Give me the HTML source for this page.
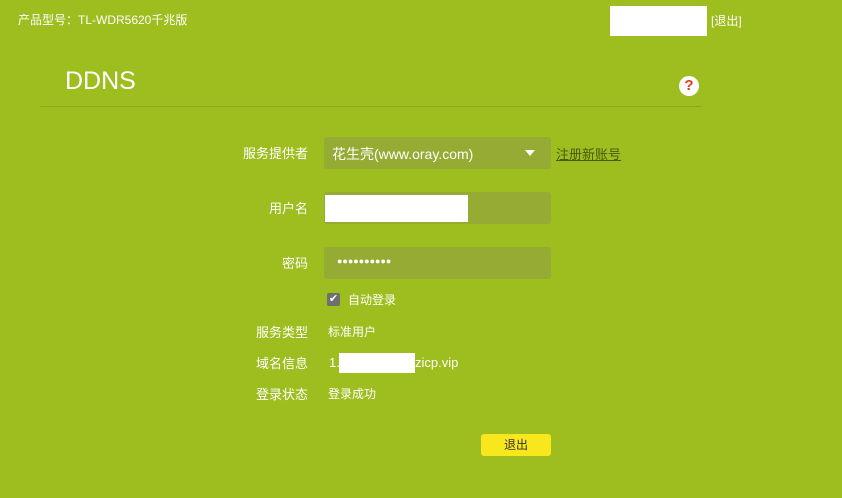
<!DOCTYPE html>
<html><head><meta charset="utf-8"><style>
*{margin:0;padding:0;box-sizing:border-box}
body{width:842px;height:498px;background:#9ebd1e;font-family:"Liberation Sans","Noto Sans CJK SC",sans-serif;color:#fff;position:relative;overflow:hidden;font-size:13px}
.a{position:absolute;white-space:nowrap}
.lbl{position:absolute;right:534px;white-space:nowrap;font-size:13px}
.fld{position:absolute;left:324px;width:227px;height:32px;background:#96ab33;border-radius:3px}
</style></head><body>
<div class="a" style="left:18px;top:11px;font-size:12px">产品型号：TL-WDR5620千兆版</div>
<div class="a" style="left:610px;top:6px;width:97px;height:30px;background:#fff"></div>
<div class="a" style="left:711px;top:12px;font-size:12px">[退出]</div>
<div class="a" style="left:65px;top:67px;font-size:25px">DDNS</div>
<div class="a" style="left:679px;top:76px;width:20px;height:20px;border-radius:50%;background:#fff;color:#e63a16;font-weight:bold;font-size:15px;text-align:center;line-height:20px">?</div>
<div class="a" style="left:40px;top:106px;width:661px;height:1px;background:#8ea61e"></div>

<div class="lbl" style="top:143px">服务提供者</div>
<div class="fld" style="top:137px"></div>
<div class="a" style="left:332px;top:144px;font-size:14px">花生壳(www.oray.com)</div>
<div class="a" style="left:525px;top:150px;width:0;height:0;border-left:5px solid transparent;border-right:5px solid transparent;border-top:6px solid #fff"></div>
<div class="a" style="left:556px;top:144px;color:#4a5a10;text-decoration:underline;font-size:13px">注册新账号</div>

<div class="lbl" style="top:198px">用户名</div>
<div class="fld" style="top:192px"></div>
<div class="a" style="left:325px;top:195px;width:143px;height:27px;background:#fff"></div>

<div class="lbl" style="top:253px">密码</div>
<div class="fld" style="top:247px"></div>
<div class="a" style="left:337px;top:256px;font-size:9px;letter-spacing:0px">●●●●●●●●●●</div>

<div class="a" style="left:327px;top:293px;width:13px;height:13px;background:#6f6f6f;border-radius:2px;color:#fff;font-size:11px;line-height:13px;text-align:center">✔</div>
<div class="a" style="left:348px;top:291px;font-size:12px">自动登录</div>

<div class="lbl" style="top:322px">服务类型</div>
<div class="a" style="left:328px;top:323px;font-size:12px">标准用户</div>
<div class="lbl" style="top:353px">域名信息</div>
<div class="a" style="left:329px;top:355px;font-size:13px">1.</div>
<div class="a" style="left:339px;top:353px;width:76px;height:20px;background:#fff"></div>
<div class="a" style="left:415px;top:355px;font-size:13px">zicp.vip</div>
<div class="lbl" style="top:384px">登录状态</div>
<div class="a" style="left:328px;top:385px;font-size:12px">登录成功</div>

<div class="a" style="left:481px;top:434px;width:70px;height:22px;background:#f8e71c;border-radius:3px;color:#333;text-align:center;line-height:22px;font-size:12px">退出</div>
</body></html>
